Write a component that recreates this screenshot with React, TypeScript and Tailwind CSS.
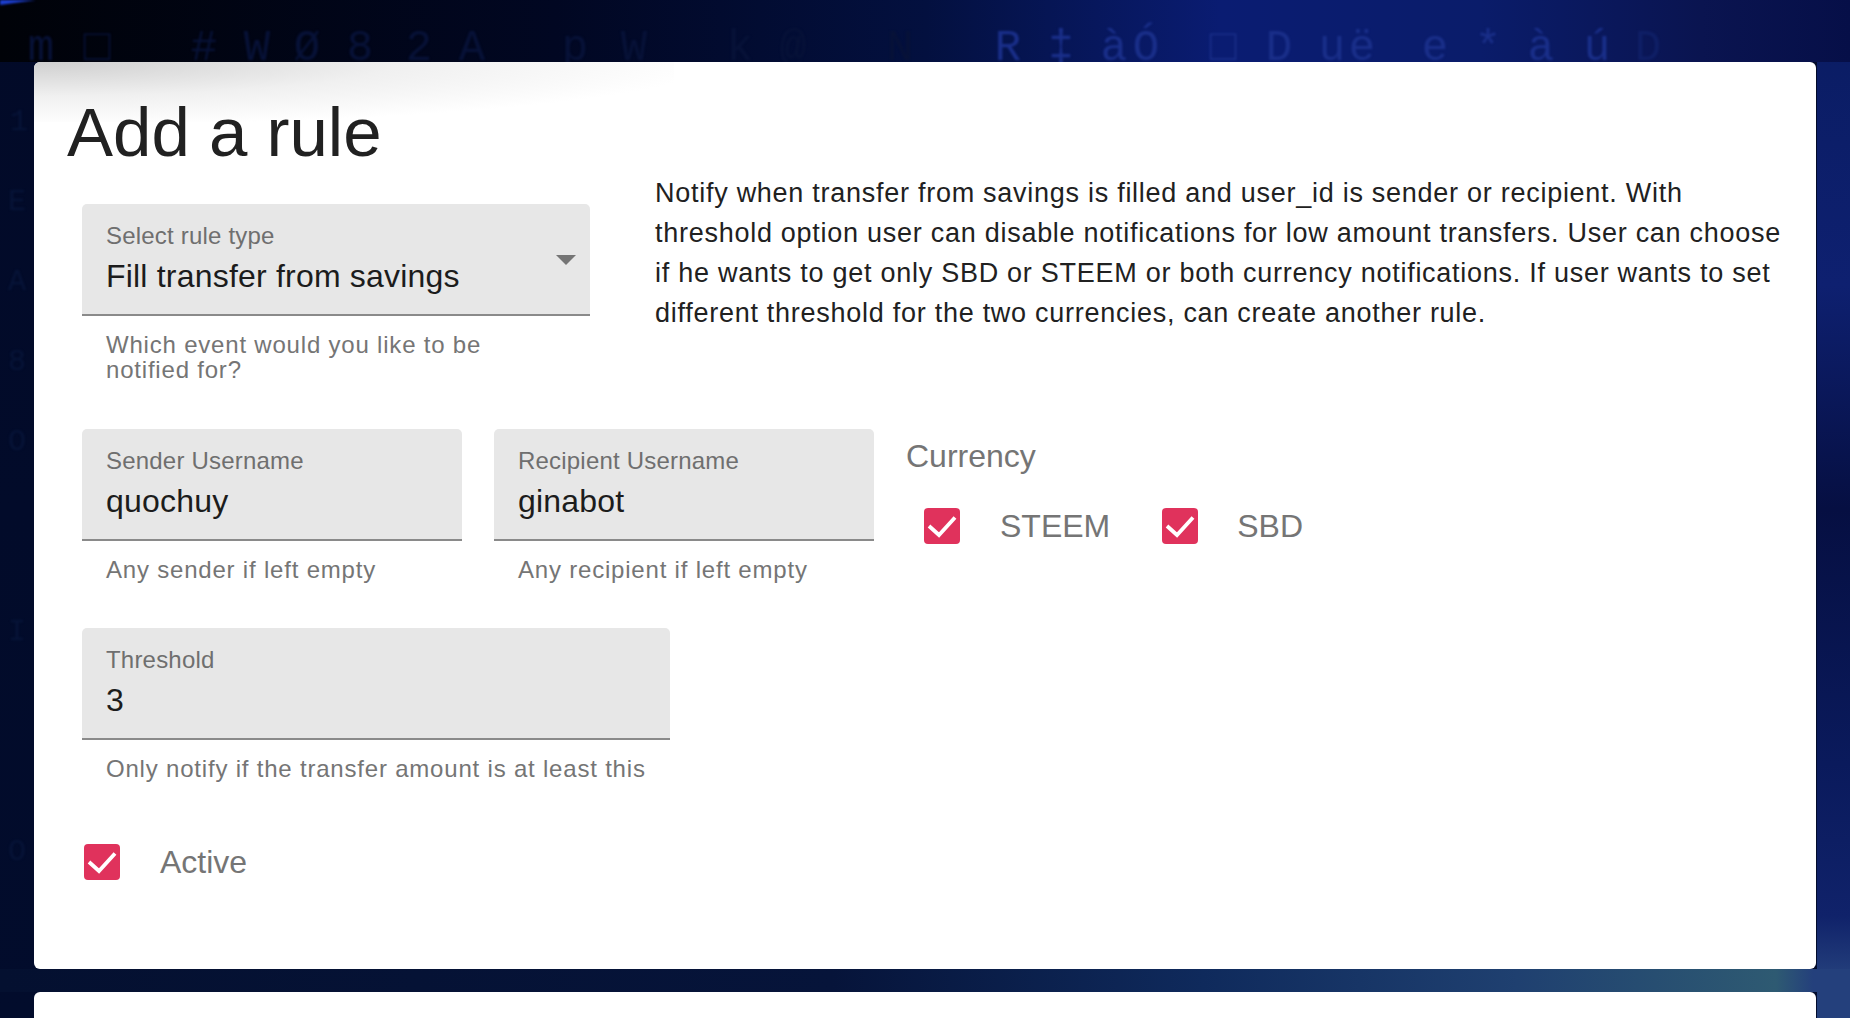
const sans = "font-['Liberation_Sans',Arial,sans-serif]";

function Check() {
  return (
    <span className="flex h-9 w-9 shrink-0 items-center justify-center rounded-[4px] bg-[#e0325c]">
      <svg viewBox="0 0 36 36" className="h-9 w-9" fill="none" stroke="#fff" strokeWidth="3.8">
        <path d="M5 18 L15 27 L31 9.5" />
      </svg>
    </span>
  );
}

function Field({ label, value, helper, className, arrow }: { label: string; value: string; helper: string; className: string; arrow?: boolean }) {
  return (
    <div className={className}>
      <div className="relative h-[112px] rounded-t-[5px] border-b-2 border-[#8a8a8a] bg-[#e7e7e7] px-6 pt-[16px]">
        <div className="text-[24px] leading-[32px] tracking-[0.2px] text-[#6f6f6f]">{label}</div>
        <div className="mt-[2px] text-[32px] leading-[44px] tracking-[0.2px] text-[#1c1c1c]">{value}</div>
        {arrow && <span className="absolute right-[14px] top-[51px] h-0 w-0 border-x-[10px] border-t-[10px] border-x-transparent border-t-[#757575]" />}
      </div>
      <div className={`mt-[16px] pl-6 text-[24px] leading-[25px] tracking-[0.8px] text-[#757575] ${arrow ? "pr-7" : "pr-0"}`}>{helper}</div>
    </div>
  );
}

const dim = [["m", 41], ["□", 97], ["#", 204], ["W", 257], ["Ø", 307], ["8", 360], ["2", 419], ["A", 472], ["p", 575], ["W", 634], ["k", 740], ["@", 793], ["N", 900]] as const;
const mid = [["R", 1008], ["‡", 1061], ["à", 1114], ["Ó", 1146], ["□", 1223], ["D", 1279], ["u", 1332], ["ë", 1362], ["e", 1435], ["*", 1488], ["à", 1541], ["ú", 1597], ["D", 1648]] as const;

function Backdrop() {
  return (
    <svg aria-hidden="true" viewBox="0 0 1850 1018" className="absolute inset-0 h-[1018px] w-[1850px] blur-[1px] font-['Liberation_Mono',monospace]">
      <polygon points="0,0 36,0 0,5" fill="#1c3fd4" />
      {dim.map(([g, x]) => (
        <text key={x} x={x} y="60" fontSize="44" textAnchor="middle" fill="#071238">{g}</text>
      ))}
      {mid.map(([g, x]) => (
        <text key={x} x={x} y="60" fontSize="44" textAnchor="middle" fill={x > 1600 ? "#0f1f66" : "#1a2f8a"}>{g}</text>
      ))}
      {[[10, 130, "1"], [8, 210, "E"], [8, 290, "A"], [8, 370, "8"], [8, 450, "O"], [8, 640, "I"], [8, 860, "O"]].map(([x, y, g]) => (
        <text key={String(y)} x={x} y={y} fontSize="30" fill="#071438">{g}</text>
      ))}
    </svg>
  );
}

export default function App() {
  return (
    <div className={`${sans} relative h-[1018px] w-full overflow-hidden px-[34px] pt-[62px] [background:linear-gradient(90deg,#000208_0%,#010722_30%,#03103f_50%,#0a1c72_66%,#0a1c6a_80%,#0a1450_92%,#060f48_100%)_0_0/100%_62px_no-repeat,linear-gradient(90deg,#041030_0%,#06143a_45%,#0f2a5c_65%,#1f4070_82%,#2e5a72_96%,#24407c_98%)_0_969px/100%_23px_no-repeat,linear-gradient(180deg,#0a1c62_0%,#0e2070_28%,#060f42_50%,#0a1a5c_75%,#10226a_90%,#24407c_96%,#24407c_100%)_1817px_0/33px_100%_no-repeat,linear-gradient(180deg,#020a28_0%,#020c2c_100%)]`}>
      <Backdrop />
      <div className="relative h-[907px] rounded-[6px] bg-white px-[48px]">
        <div className="absolute left-0 top-0 h-[60px] w-[640px] rounded-tl-[6px] bg-[radial-gradient(ellipse_at_top_left,#cfcfcf_0%,#f0f0f0_40%,#ffffff_75%)]" />
        <h1 className="relative -ml-[15px] pt-[31px] text-[69px] leading-[80px] text-[#212121]">Add a rule</h1>
        <div className="flex gap-[65px] pt-[31px]">
          <Field className="w-[508px] shrink-0" label="Select rule type" value="Fill transfer from savings" helper="Which event would you like to be notified for?" arrow />
          <p className="-mt-[31px] w-[1130px] shrink-0 text-[27px] leading-[40px] tracking-[0.73px] text-[#212121]">
            Notify when transfer from savings is filled and user_id is sender or recipient. With threshold option user can disable notifications for low amount transfers. User can choose if he wants to get only SBD or STEEM or both currency notifications. If user wants to set different threshold for the two currencies, can create another rule.
          </p>
        </div>
        <div className="mt-[47px] flex">
          <Field className="w-[380px]" label="Sender Username" value="quochuy" helper="Any sender if left empty" />
          <Field className="ml-[32px] w-[380px]" label="Recipient Username" value="ginabot" helper="Any recipient if left empty" />
          <div className="ml-[32px]">
            <div className="pt-[7px] text-[32px] leading-[40px] text-[#757575]">Currency</div>
            <div className="mt-[26px] flex items-center pl-[18px] text-[32px] text-[#757575]">
              <Check />
              <span className="ml-[40px]">STEEM</span>
              <span className="ml-[52px]"><Check /></span>
              <span className="ml-[39px]">SBD</span>
            </div>
          </div>
        </div>
        <Field className="mt-[46px] w-[588px]" label="Threshold" value="3" helper="Only notify if the transfer amount is at least this" />
        <div className="mt-[57px] ml-[2px] flex items-center text-[32px] text-[#757575]">
          <Check />
          <span className="ml-[40px]">Active</span>
        </div>
      </div>
      <div className="relative mt-[23px] h-[100px] rounded-[6px] bg-white" />
    </div>
  );
}
